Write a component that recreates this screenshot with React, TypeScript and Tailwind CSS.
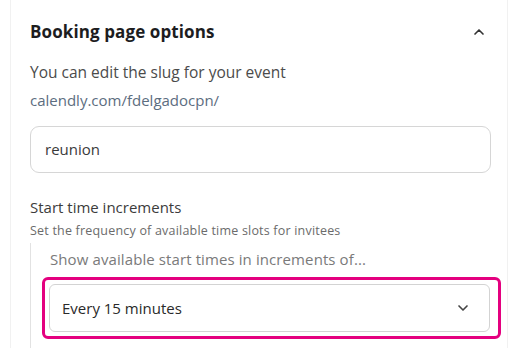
import React from 'react';
import { ChevronUp, ChevronDown } from 'lucide-react';

const App = () => {
  return (
    <div className="w-[520px] h-[348px] overflow-hidden bg-white" style={{ fontFamily: '"Open Sans", Lato, sans-serif' }}>
      <div className="ml-[10px] w-[498px] h-full border-x border-[#f1f1f1] pl-[19px] pr-[18px]">
        {/* Header */}
        <div className="flex items-center justify-between pt-[19px] h-[44px]">
          <h2 className="text-[17px] font-bold text-[#1d1d1f] tracking-[0.1px]">Booking page options</h2>
          <ChevronUp className="w-4 h-4 text-[#333] mr-[2px]" strokeWidth={2.5} />
        </div>

        {/* Slug */}
        <p className="mt-[18px] text-[15.5px] text-[#4b4b4b] leading-[20px]">You can edit the slug for your event</p>
        <p className="mt-[8px] text-[15px] text-[#5c6d80] leading-[20px]">calendly.com/fdelgadocpn/</p>

        <div className="mt-[16px] w-[461px] h-[47px] rounded-[9px] border border-[#d6d6d6] flex items-center px-[14px]">
          <span className="text-[15px] text-[#3a3a3a]">reunion</span>
        </div>

        {/* Start time increments */}
        <p className="mt-[24px] text-[15px] text-[#3c3c3c] leading-[20px]">Start time increments</p>
        <p className="mt-[6px] text-[12.5px] text-[#6b6b6b] leading-[16px] tracking-[0.2px]">Set the frequency of available time slots for invitees</p>

        <div className="mt-[4px] border-l border-[#e2e2e2] pl-[11px] pt-[6px] pb-[20px]">
          <p className="ml-[8px] text-[15px] text-[#7a7a7a] leading-[20px] tracking-[0.1px]">Show available start times in increments of...</p>
          <div className="mt-[8px] w-[459px] h-[62px] border-[3px] border-[#e4007f] rounded-[6px] py-[4px] pl-[4px] pr-[8px]">
            <div className="h-full rounded-[6px] border border-[#d3d3d3] flex items-center justify-between pl-[12px] pr-[18px]">
              <span className="text-[15px] font-medium text-[#2a2a2a]">Every 15 minutes</span>
              <ChevronDown className="w-4 h-4 text-[#444]" strokeWidth={2.5} />
            </div>
          </div>
        </div>
      </div>
    </div>
  );
};

export default App;
